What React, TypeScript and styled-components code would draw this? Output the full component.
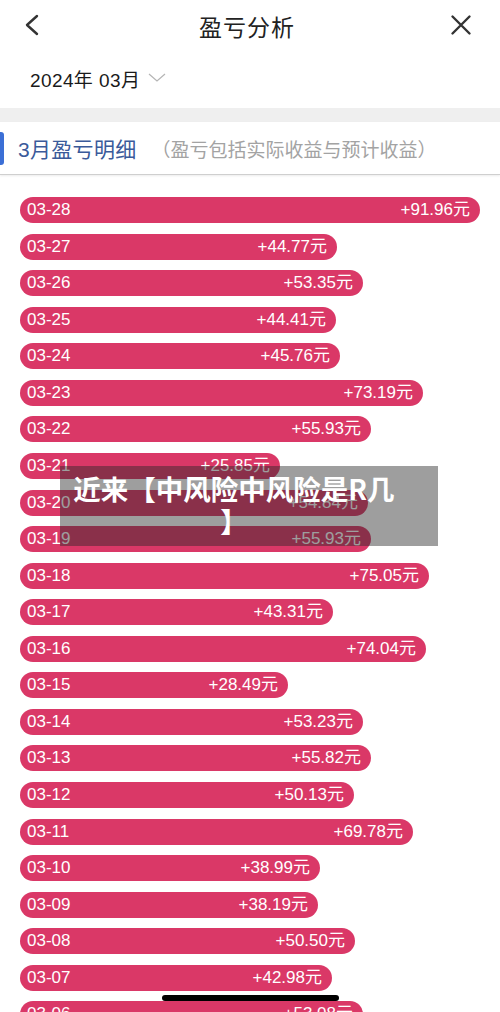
import React from "react";
import styled, { createGlobalStyle } from "styled-components";

const GlobalStyle = createGlobalStyle`
  html, body {
    margin: 0;
    padding: 0;
    background: #ffffff;
  }
  body {
    font-family: "Liberation Sans", "Noto Sans CJK SC", sans-serif;
    -webkit-font-smoothing: antialiased;
  }
`;

const MAX_BAR = 460;
const MIN_BAR = 182;
const SCALE = 3.025;

interface DayRecord {
  day: string;
  amount: number;
}

const records: DayRecord[] = [
  { day: "03-28", amount: 91.96 },
  { day: "03-27", amount: 44.77 },
  { day: "03-26", amount: 53.35 },
  { day: "03-25", amount: 44.41 },
  { day: "03-24", amount: 45.76 },
  { day: "03-23", amount: 73.19 },
  { day: "03-22", amount: 55.93 },
  { day: "03-21", amount: 25.85 },
  { day: "03-20", amount: 54.84 },
  { day: "03-19", amount: 55.93 },
  { day: "03-18", amount: 75.05 },
  { day: "03-17", amount: 43.31 },
  { day: "03-16", amount: 74.04 },
  { day: "03-15", amount: 28.49 },
  { day: "03-14", amount: 53.23 },
  { day: "03-13", amount: 55.82 },
  { day: "03-12", amount: 50.13 },
  { day: "03-11", amount: 69.78 },
  { day: "03-10", amount: 38.99 },
  { day: "03-09", amount: 38.19 },
  { day: "03-08", amount: 50.5 },
  { day: "03-07", amount: 42.98 },
  { day: "03-06", amount: 53.08 },
];

const Page = styled.div`
  position: relative;
  width: 500px;
  height: 1012px;
  overflow: hidden;
  background: #ffffff;
`;

const NavBar = styled.div`
  height: 50px;
  display: flex;
  align-items: center;
  justify-content: space-between;
  padding: 0 26px 0 20px;
`;

const NavTitle = styled.div`
  font-family: "Noto Sans CJK SC", sans-serif;
  font-size: 23px;
  color: #222222;
  letter-spacing: 1px;
  padding-top: 1px;
`;

const IconButton = styled.div`
  width: 26px;
  height: 26px;
  display: flex;
  align-items: center;
  justify-content: center;
`;

const DateRow = styled.div`
  height: 58px;
  display: flex;
  align-items: center;
  padding-left: 30px;
  gap: 7px;
  font-size: 19px;
  letter-spacing: 0.4px;
  color: #1a1a1a;
  padding-bottom: 2px;
  box-sizing: border-box;
`;

const Spacer = styled.div`
  height: 14px;
  background: #efefef;
`;

const SectionHeader = styled.div`
  height: 53px;
  display: flex;
  align-items: center;
  border-bottom: 1px solid #cfcfcf;
  box-shadow: 0 1px 2px rgba(0, 0, 0, 0.08);
  box-sizing: border-box;
`;

const Marker = styled.div`
  width: 4px;
  height: 33px;
  background: #3b6fd6;
  border-radius: 0 3px 3px 0;
  margin-right: 14px;
`;

const SectionTitle = styled.div`
  font-size: 21px;
  color: #3a5a9a;
  letter-spacing: 0.3px;
`;

const SectionNote = styled.div`
  font-size: 19px;
  color: #a3a3a3;
  margin-left: 15px;
`;

const BarList = styled.div`
  display: flex;
  flex-direction: column;
  gap: 10.57px;
  padding: 22px 0 0 20px;
`;

const Bar = styled.div`
  height: 26px;
  border-radius: 13px;
  background: #da3867;
  display: flex;
  align-items: baseline;
  justify-content: space-between;
  padding: 0 10px 0 7px;
  box-sizing: border-box;
  overflow: hidden;
  color: #ffffff;
  font-size: 17px;
  line-height: 26px;
  max-width: ${MAX_BAR}px;
`;

const Amount = styled.span`
  font-size: 17px;
`;

const Overlay = styled.div`
  position: absolute;
  left: 60px;
  top: 466px;
  width: 378px;
  height: 80px;
  background: rgba(40, 40, 40, 0.45);
  display: flex;
  align-items: center;
  justify-content: center;
  padding: 0 38px 0 8px;
  box-sizing: border-box;
`;

const OverlayText = styled.div`
  width: 100%;
  font-family: "Noto Sans CJK SC", sans-serif;
  font-weight: 700;
  font-size: 27.5px;
  line-height: 32px;
  color: #ffffff;
  text-align: center;
  line-break: anywhere;
  word-break: break-all;
  padding-bottom: 4px;
`;

const HomeIndicator = styled.div`
  position: absolute;
  left: 162px;
  top: 995px;
  width: 177px;
  height: 6px;
  border-radius: 3px;
  background: #000000;
`;

export default function App() {
  return (
    <Page>
      <GlobalStyle />
      <NavBar>
        <IconButton>
          <svg width="26" height="26" viewBox="0 0 26 26">
            <polyline
              points="17,4 7,13 17,22"
              fill="none"
              stroke="#333"
              strokeWidth="2.4"
              strokeLinecap="round"
              strokeLinejoin="round"
            />
          </svg>
        </IconButton>
        <NavTitle>盈亏分析</NavTitle>
        <IconButton>
          <svg width="26" height="26" viewBox="0 0 26 26">
            <path
              d="M4.5 4.5 L21.5 21.5 M21.5 4.5 L4.5 21.5"
              fill="none"
              stroke="#333"
              strokeWidth="2.4"
              strokeLinecap="round"
            />
          </svg>
        </IconButton>
      </NavBar>
      <DateRow>
        <span>2024年 03月</span>
        <svg width="20" height="12" viewBox="0 0 20 12">
          <polyline points="2,2 10,9 18,2" fill="none" stroke="#b5b5b5" strokeWidth="1.2" />
        </svg>
      </DateRow>
      <Spacer />
      <SectionHeader>
        <Marker />
        <SectionTitle>3月盈亏明细</SectionTitle>
        <SectionNote>（盈亏包括实际收益与预计收益）</SectionNote>
      </SectionHeader>
      <BarList>
        {records.map((r) => (
          <Bar key={r.day} style={{ width: Math.round(MIN_BAR + SCALE * r.amount) }}>
            <span>{r.day}</span>
            <Amount>+{r.amount.toFixed(2)}元</Amount>
          </Bar>
        ))}
      </BarList>
      <Overlay>
        <OverlayText>近来【中风险中风险是R几】</OverlayText>
      </Overlay>
      <HomeIndicator />
    </Page>
  );
}
